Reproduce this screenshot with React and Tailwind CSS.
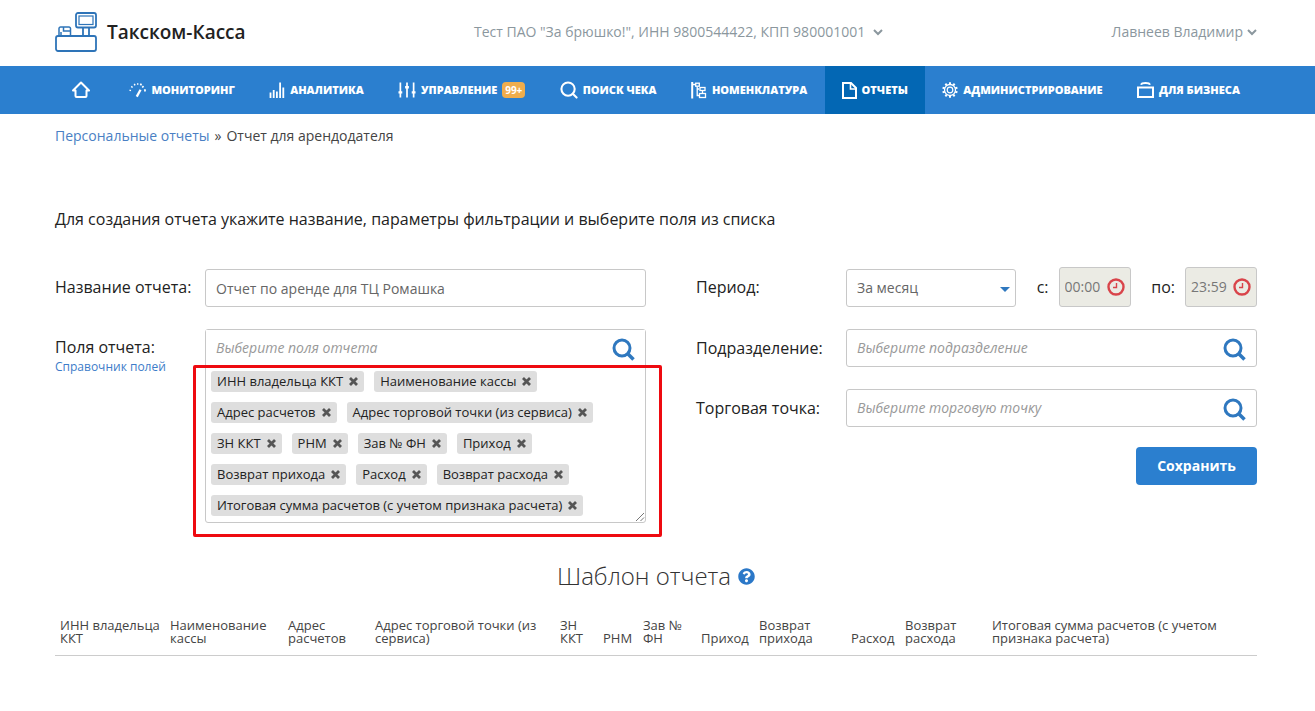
import React, { useState } from "react";
import { FaQuestionCircle } from "react-icons/fa";

const IconHome = () => (
  <svg className="w-[18px] h-[18px]" viewBox="0 0 18 18" fill="none" stroke="currentColor" strokeWidth="2" strokeLinejoin="round" strokeLinecap="round">
    <path d="M1 9.5 9 1.5l8 8h-2.5v5.5a1 1 0 0 1-1 1h-9a1 1 0 0 1-1-1V9.5z" />
  </svg>
);

const IconGauge = () => (
  <svg className="w-[17px] h-[17px]" viewBox="0 0 18 18" fill="none" stroke="currentColor">
    <path d="M.5 8.6l1.6.5M2.4 4.6l1.4 1.2M5.6 2l.8 1.6M9.2 1.2v1.8" strokeWidth="1.5" />
    <path d="M13 1.8l-.8 1.8M15.4 4.4l-1.4 1.4M16.6 7.600l.6 2.400" strokeWidth="1.8" />
    <path d="M12.2 8.2 8.2 15.5" strokeWidth="2.4" />
  </svg>
);

const IconBars = () => (
  <svg className="w-[16px] h-[18px]" viewBox="0 0 16 18" fill="none" stroke="currentColor" strokeWidth="1.8">
    <path d="M1.5 17v-5.5M4.700 17V9M7.900 17v-6.500M11.100 17V1.5M14.300 17V6.500" />
  </svg>
);

const IconSliders = () => (
  <svg className="w-[18px] h-[18px]" viewBox="0 0 19 18" fill="none" stroke="currentColor">
    <path d="M2.5 1v16M9.5 1v16M16.5 1v16" strokeWidth="1.8" />
    <path d="M.5 11.5h4M7.5 6h4M14.5 11.5h4" strokeWidth="2.6" />
  </svg>
);

const IconLens = () => (
  <svg className="w-[18px] h-[18px]" viewBox="0 0 19 19" fill="none" stroke="currentColor" strokeWidth="2.2" strokeLinecap="round">
    <circle cx="8.5" cy="8.5" r="7" />
    <path d="M13.5 13.5l4 4" />
  </svg>
);

const IconTree = () => (
  <svg className="w-[16px] h-[18px]" viewBox="0 0 16 18" fill="none" stroke="currentColor" strokeWidth="1.3">
    <path d="M1.2 1v16.5" strokeWidth="2" />
    <path d="M1.5 3.5h3M6.2 5.5v9h2M6.2 8h2" />
    <rect x="4.7" y="2.2" width="3.6" height="3" />
    <rect x="9" y="6.5" width="5" height="3" />
    <rect x="8.5" y="12.5" width="6" height="4" />
    <path d="M11.5 9.5v3" />
  </svg>
);

const IconFile = () => (
  <svg className="w-[15px] h-[17px]" viewBox="0 0 15 17" fill="none" stroke="currentColor" strokeWidth="2">
    <path d="M1 1h8l5 5v10H1z" />
    <path d="M8.5 1v6H14" strokeWidth="1.6" />
  </svg>
);

const teeth = [0, 36, 72, 108, 144, 180, 216, 252, 288, 324];

const IconGear = () => (
  <svg className="w-[16px] h-[16px]" viewBox="0 0 16 16" fill="none" stroke="currentColor">
    <circle cx="8" cy="8" r="5.5" strokeWidth="1.3" />
    <circle cx="8" cy="8" r="2.8" strokeWidth="1.2" />
    {teeth.map((angle) => (
      <path key={angle} d="M8 .2v2.2" strokeWidth="2" transform={`rotate(${angle} 8 8)`} />
    ))}
  </svg>
);

const IconCase = () => (
  <svg className="w-[17px] h-[16px]" viewBox="0 0 17 16" fill="none" stroke="currentColor" strokeWidth="2">
    <path d="M1 5.5h15V15H1z" />
    <path d="M4 2.8Q4.5 1 8.5 1T13 2.8" strokeWidth="1.8" />
  </svg>
);

const IconChevron = () => (
  <svg className="w-[10px] h-[7px]" viewBox="0 0 10 7" fill="none" stroke="currentColor" strokeWidth="2">
    <path d="M1 1l4 4 4-4" />
  </svg>
);

const IconClock = () => (
  <svg className="w-[18px] h-[18px]" viewBox="0 0 18 18" fill="none" stroke="currentColor">
    <circle cx="9" cy="9" r="7.5" strokeWidth="2.4" />
    <path d="M9.5 5v4.5H6" strokeWidth="1.4" />
  </svg>
);

const Logo = () => (
  <svg className="w-[42px] h-[40px]" viewBox="0 0 42 40" fill="none" stroke="#2e74b8" strokeWidth="1.8">
    <rect x="1" y="24" width="40" height="15" rx="2" />
    <rect x="21" y="1" width="20" height="14.5" rx="2" />
    <rect x="24" y="4" width="14" height="8.5" strokeWidth="1.2" />
    <path d="M28 15.5V24M34 15.5V24" />
    <path d="M4 24v-7.5a1.5 1.5 0 0 1 1.5-1.5h8.5a1.5 1.5 0 0 1 1.5 1.5V24M6 24v-4M8.5 15v4h7" strokeWidth="1.5" />
  </svg>
);

const menu = [
  { icon: <IconHome />, label: "" },
  { icon: <IconGauge />, label: "Мониторинг" },
  { icon: <IconBars />, label: "Аналитика" },
  { icon: <IconSliders />, label: "Управление", badge: "99+" },
  { icon: <IconLens />, label: "Поиск чека" },
  { icon: <IconTree />, label: "Номенклатура" },
  { icon: <IconFile />, label: "Отчеты", active: true },
  { icon: <IconGear />, label: "Администрирование" },
  { icon: <IconCase />, label: "Для бизнеса" },
];

const initialFields = [
  "ИНН владельца ККТ",
  "Наименование кассы",
  "Адрес расчетов",
  "Адрес торговой точки (из сервиса)",
  "ЗН ККТ",
  "РНМ",
  "Зав № ФН",
  "Приход",
  "Возврат прихода",
  "Расход",
  "Возврат расхода",
  "Итоговая сумма расчетов (с учетом признака расчета)",
];

const columnWidths = [110, 118, 87, 185, 43, 40, 58, 58, 92, 54, 87, 270];

const SearchInput = ({ id, placeholder, bordered = true }) => (
  <div
    className={`flex items-center px-[10px] bg-white ${
      bordered ? "h-[38px] border border-[#c8c8c8] rounded-[3px]" : "h-9"
    }`}
  >
    <input
      id={id}
      type="text"
      placeholder={placeholder}
      className="flex-1 min-w-0 text-sm italic text-[#555] placeholder:text-[#999] focus:outline-none"
    />
    <button type="button" aria-label="Найти" className="pt-[2px] text-[#2f78bf]">
      <svg className="w-[23px] h-[23px]" viewBox="0 0 23 23" fill="none" stroke="currentColor">
        <circle cx="10" cy="10" r="8" strokeWidth="3" />
        <path d="M15.5 15.5l6 6" strokeWidth="3.6" />
      </svg>
    </button>
  </div>
);

const TimeInput = ({ id, label, value }) => (
  <div className="flex items-center gap-[10px]">
    <label htmlFor={id}>{label}</label>
    <div className="flex items-center w-[72px] h-10 px-[5px] bg-[#ebebe4] border border-[#c8c8c8] rounded-[3px]">
      <input id={id} type="text" value={value} readOnly className="flex-1 min-w-0 text-sm text-[#777] focus:outline-none" />
      <span className="text-[#d9444a]">
        <IconClock />
      </span>
    </div>
  </div>
);

const App = () => {
  const [name, setName] = useState("Отчет по аренде для ТЦ Ромашка");
  const [fields, setFields] = useState(initialFields);

  const removeField = (field) => {
    setFields(fields.filter((item) => item !== field));
  };

  return (
    <div className="min-h-screen bg-white font-['Open_Sans',sans-serif] text-[#222]">
      <header className="flex items-center justify-between h-[66px] pl-[55px] pr-[58px] pb-[2px]">
        <a href="#" className="flex items-center gap-[10px] text-[19px] font-semibold">
          <Logo />
          Такском-Касса
        </a>
        <button type="button" className="flex items-center gap-2 text-sm text-[#8b979e]">
          Тест ПАО "За брюшко!", ИНН 9800544422, КПП 980001001
          <IconChevron />
        </button>
        <button type="button" className="flex items-center gap-1 text-sm text-[#8b979e]">
          Лавнеев Владимир
          <IconChevron />
        </button>
      </header>

      <nav className="flex justify-between h-12 pl-[55px] pr-[58px] bg-[#2b7fcf] text-white">
        {menu.map((item) => (
          <a
            key={item.label}
            href="#"
            aria-label={item.label || "Главная"}
            className={`flex items-center gap-[5px] px-[17px] text-[11px] font-extrabold uppercase whitespace-nowrap ${
              item.active ? "bg-[#0367b4]" : ""
            }`}
          >
            {item.icon}
            <span>{item.label}</span>
            {item.badge && (
              <span className="flex items-center justify-center w-[23px] h-4 rounded bg-[#efad4d] text-[10px] font-bold">
                {item.badge}
              </span>
            )}
          </a>
        ))}
      </nav>

      <main className="pl-[55px] pr-[58px]">
        <div className="flex gap-[5px] pt-3 text-sm text-[#444]">
          <a href="#" className="text-[#4a7fc4]">
            Персональные отчеты
          </a>
          <span>»</span>
          <span>Отчет для арендодателя</span>
        </div>

        <p className="mt-[61px] text-base">
          Для создания отчета укажите название, параметры фильтрации и выберите поля из списка
        </p>

        <form className="grid grid-cols-[591fr_561fr] gap-x-[50px] mt-9" onSubmit={(e) => e.preventDefault()}>
          <div className="flex flex-col gap-[22px]">
            <div className="flex items-end">
              <label htmlFor="name" className="w-[150px] h-10 leading-10">
                Название отчета:
              </label>
              <input
                id="name"
                type="text"
                value={name}
                onChange={(e) => setName(e.target.value)}
                className="flex-1 min-w-0 h-[38px] px-[10px] border border-[#c8c8c8] rounded-[3px] text-sm text-[#666] focus:outline-none"
              />
            </div>
            <div className="flex items-start">
              <div className="w-[150px] pt-[6px]">
                <label htmlFor="fields" className="block">
                  Поля отчета:
                </label>
                <a href="#" className="block text-xs text-[#3d7cc9]">
                  Справочник полей
                </a>
              </div>
              <div className="relative flex-1 min-w-0 border border-[#c8c8c8] rounded-[3px]">
                <SearchInput id="fields" placeholder="Выберите поля отчета" bordered={false} />
                <ul className="flex flex-wrap gap-[10px] px-[5px] pt-[5px] pb-[6px]">
                  {fields.map((field) => (
                    <li key={field} className="flex items-center gap-[6px] h-[21px] px-[6px] rounded-[3px] bg-[#dedede] text-[13px] whitespace-nowrap">
                      {field}
                      <button type="button" aria-label={`Удалить ${field}`} onClick={() => removeField(field)} className="text-[#555]">
                        <svg className="w-[9px] h-[9px]" viewBox="0 0 9 9" fill="none" stroke="currentColor" strokeWidth="2.8">
                          <path d="M1 1l7 7M8 1L1 8" />
                        </svg>
                      </button>
                    </li>
                  ))}
                </ul>
                <svg className="absolute right-0 bottom-0 w-[10px] h-[10px]" viewBox="0 0 10 10" fill="none" stroke="#777">
                  <path d="M1 9l8-8M5.5 9L9 5.5" />
                </svg>
                {/* рамка вокруг выбранных полей */}
                <div className="absolute -left-[13px] -right-[17px] top-[35px] -bottom-[15px] border-3 border-[#ee0a10] rounded-[2px] pointer-events-none" />
              </div>
            </div>
          </div>

          <div className="flex flex-col">
            <div className="flex flex-col gap-[22px]">
              <div className="flex items-end">
                <label htmlFor="period" className="w-[150px] h-10 leading-10">
                  Период:
                </label>
                <div className="flex flex-1 items-center justify-between">
                  <div className="relative w-[170px] self-end">
                    <select
                      id="period"
                      className="block w-full h-[38px] px-[10px] appearance-none bg-white border border-[#c8c8c8] rounded-[3px] text-sm text-[#666] focus:outline-none"
                    >
                      <option>За месяц</option>
                      <option>За неделю</option>
                      <option>За день</option>
                    </select>
                    <svg className="absolute right-[6px] top-[18px] w-[10px] h-[5px] pointer-events-none" viewBox="0 0 10 5" fill="#2f78bf">
                      <path d="M0 0h10L5 5z" />
                    </svg>
                  </div>
                  <TimeInput id="from" label="с:" value="00:00" />
                  <TimeInput id="to" label="по:" value="23:59" />
                </div>
              </div>
              <div className="flex items-center">
                <label htmlFor="department" className="w-[150px]">
                  Подразделение:
                </label>
                <div className="flex-1">
                  <SearchInput id="department" placeholder="Выберите подразделение" />
                </div>
              </div>
              <div className="flex items-center">
                <label htmlFor="outlet" className="w-[150px]">
                  Торговая точка:
                </label>
                <div className="flex-1">
                  <SearchInput id="outlet" placeholder="Выберите торговую точку" />
                </div>
              </div>
            </div>
            <button type="submit" className="self-end w-[121px] h-[38px] mt-5 rounded bg-[#2b7fcf] text-sm font-bold text-white hover:bg-[#0367b4]">
              Сохранить
            </button>
          </div>
        </form>

        <h2 className="flex items-center justify-center gap-[7px] mt-[37px] text-2xl font-light text-[#333]">
          Шаблон отчета
          <FaQuestionCircle className="w-[17px] h-[17px] text-[#2b78c8]" />
        </h2>

        <table className="w-full mt-[27px] table-fixed border-b border-[#ccc]">
          <colgroup>
            {columnWidths.map((width, i) => (
              <col key={i} style={{ width: `${(width / 1202) * 100}%` }} />
            ))}
          </colgroup>
          <thead>
            <tr>
              {fields.map((field) => (
                <th key={field} className="px-[5px] pb-[10px] text-left align-bottom text-[13px] leading-[13px] font-normal text-[#444]">
                  {field}
                </th>
              ))}
            </tr>
          </thead>
        </table>
      </main>
    </div>
  );
};

export default App;
